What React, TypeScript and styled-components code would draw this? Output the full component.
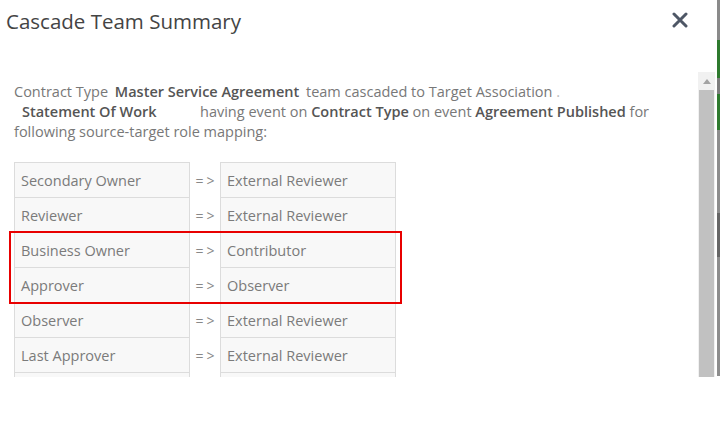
import React from "react";
import styled, { createGlobalStyle } from "styled-components";

const GlobalStyle = createGlobalStyle`
  html, body {
    margin: 0;
    padding: 0;
    background: #fff;
    overflow: hidden;
  }
  body {
    font-family: "Open Sans", "Noto Sans", "Liberation Sans", sans-serif;
  }
`;

const Page = styled.div`
  display: flex;
  width: 720px;
  height: 424px;
`;

const Modal = styled.section`
  width: 717px;
  height: 424px;
  background: #fff;
  display: flex;
  flex-direction: column;
`;

const Backdrop = styled.div`
  width: 3px;
  height: 424px;
  background: linear-gradient(
    to bottom,
    #8a8a8a 0px,
    #8a8a8a 40px,
    #2f7a2f 40px,
    #2f7a2f 78px,
    #7d7d7d 78px,
    #7d7d7d 94px,
    #2f7a2f 94px,
    #2f7a2f 130px,
    #8d8d8d 130px,
    #8d8d8d 213px,
    #666 213px,
    #666 257px,
    #8d8d8d 257px,
    #8d8d8d 376px,
    #fff 376px
  );
`;

const Header = styled.header`
  height: 72px;
  display: flex;
  justify-content: space-between;
  align-items: flex-start;
`;

const Title = styled.h2`
  margin: 0;
  padding: 6px 0 0 6px;
  font-size: 20.5px;
  font-weight: 400;
  color: #444;
  line-height: 30px;
`;

const CloseButton = styled.button`
  border: none;
  background: none;
  padding: 0;
  margin: 12px 29px 0 0;
  width: 16px;
  height: 16px;
  cursor: pointer;
  display: flex;
`;

const Body = styled.div`
  display: flex;
  height: 305px;
`;

const Content = styled.div`
  flex: 1;
  overflow: hidden;
  padding: 10px 0 0 14px;
`;

const Intro = styled.p`
  margin: 0;
  font-size: 14.5px;
  line-height: 20px;
  color: #787878;
  b {
    font-weight: 600;
    color: #555;
  }
`;

const Gap = styled.span<{ w: number }>`
  display: inline-block;
  width: ${(p) => p.w}px;
`;

const Label = styled.b`
  display: inline-block;
  width: 186px;
  padding-left: 8px;
  box-sizing: border-box;
`;

const Faint = styled.span`
  color: #bbb;
`;

const Table = styled.div`
  margin-top: 21px;
  display: flex;
  flex-direction: column;
  align-items: flex-start;
`;

const Highlight = styled.div`
  position: relative;
  display: flex;
  flex-direction: column;
  &::after {
    content: "";
    position: absolute;
    top: -2px;
    bottom: -1px;
    left: -5px;
    right: -6px;
    border: 2px solid #e80000;
    pointer-events: none;
  }
`;

const Row = styled.div`
  display: flex;
  height: 35px;
`;

const Cell = styled.div<{ first?: boolean }>`
  width: 176px;
  box-sizing: border-box;
  background: #f8f8f8;
  border: 1px solid #dcdcdc;
  border-top: ${(p) => (p.first ? "1px solid #dcdcdc" : "none")};
  height: ${(p) => (p.first ? "36px" : "35px")};
  margin-top: ${(p) => (p.first ? "-1px" : "0")};
  padding: 0 6px;
  display: flex;
  align-items: center;
  font-size: 14.5px;
  color: #7b7b7b;
  white-space: nowrap;
`;

const Arrow = styled.div`
  width: 30px;
  display: flex;
  align-items: center;
  justify-content: center;
  font-size: 14px;
  color: #888;
  letter-spacing: 3px;
  padding-left: 3px;
  box-sizing: border-box;
`;

const Scrollbar = styled.div`
  width: 17px;
  margin-right: 2px;
  display: flex;
  flex-direction: column;
`;

const ScrollUp = styled.div`
  height: 18px;
  background: #f1f1f1;
  display: flex;
  align-items: center;
  justify-content: center;
`;

const Thumb = styled.div`
  flex: 1;
  background: #c1c1c1;
  border-left: 1px solid #f1f1f1;
  border-right: 1px solid #f1f1f1;
`;

type Mapping = [string, string];

const before: Mapping[] = [
  ["Secondary Owner", "External Reviewer"],
  ["Reviewer", "External Reviewer"],
];
const highlighted: Mapping[] = [
  ["Business Owner", "Contributor"],
  ["Approver", "Observer"],
];
const after: Mapping[] = [
  ["Observer", "External Reviewer"],
  ["Last Approver", "External Reviewer"],
  ["", ""],
];

function MapRow({ from, to, first }: { from: string; to: string; first?: boolean }) {
  return (
    <Row>
      <Cell first={first}>{from}</Cell>
      <Arrow>{from ? "=>" : ""}</Arrow>
      <Cell first={first}>{to}</Cell>
    </Row>
  );
}

export default function App() {
  return (
    <Page>
      <GlobalStyle />
      <Modal>
        <Header>
          <Title>Cascade Team Summary</Title>
          <CloseButton aria-label="Close">
            <svg width="16" height="16" viewBox="0 0 16 16">
              <path d="M2 2 L14 14 M14 2 L2 14" stroke="#4e5766" strokeWidth="3" strokeLinecap="round" />
            </svg>
          </CloseButton>
        </Header>
        <Body>
          <Content>
            <Intro>
              Contract Type <Gap w={3} />
              <b>Master Service Agreement</b> <Gap w={3} />
              team cascaded to Target Association <Faint>.</Faint>
              <br />
              <Label>Statement Of Work</Label>
              having event on <b>Contract Type</b> on event <b>Agreement Published</b> for
              <br />
              following source-target role mapping:
            </Intro>
            <Table>
              {before.map(([f, t], i) => (
                <MapRow key={f} from={f} to={t} first={i === 0} />
              ))}
              <Highlight>
                {highlighted.map(([f, t]) => (
                  <MapRow key={f} from={f} to={t} />
                ))}
              </Highlight>
              {after.map(([f, t], i) => (
                <MapRow key={`a${i}`} from={f} to={t} />
              ))}
            </Table>
          </Content>
          <Scrollbar>
            <ScrollUp>
              <svg width="8" height="5" viewBox="0 0 8 5">
                <path d="M0 5 L4 0 L8 5 Z" fill="#a3a3a3" />
              </svg>
            </ScrollUp>
            <Thumb />
          </Scrollbar>
        </Body>
      </Modal>
      <Backdrop />
    </Page>
  );
}
